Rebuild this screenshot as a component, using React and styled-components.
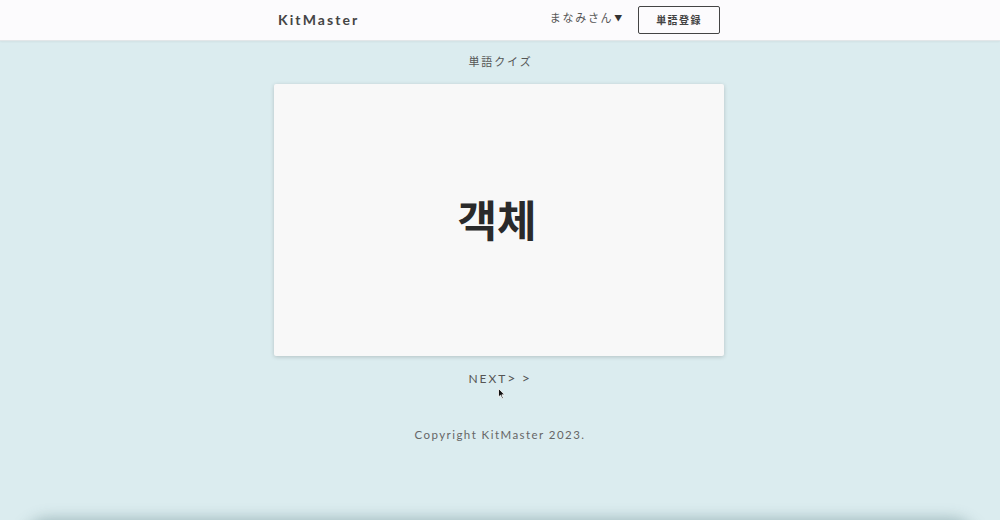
import React from "react";
import styled, { createGlobalStyle } from "styled-components";

const Global = createGlobalStyle`
  html, body { margin: 0; padding: 0; }
  body {
    background: #dbecef;
    font-family: Lato, "Noto Sans", "Noto Sans CJK JP", sans-serif;
    color: #444;
  }
`;

const Page = styled.div`
  position: relative;
  height: 520px;
  overflow: hidden;
`;

const Header = styled.header`
  background: #fcfbfd;
  height: 41px;
  border-bottom: 1px solid #e2e6e8;
  box-sizing: border-box;
  box-shadow: 0 1px 2px rgba(0,0,0,0.05);
`;

const HeaderInner = styled.div`
  width: 450px;
  margin: 0 auto;
  height: 100%;
  display: flex;
  align-items: center;
  padding: 0 5px 0 3px;
  box-sizing: border-box;
`;

const Logo = styled.div`
  font-size: 14px;
  font-weight: 700;
  letter-spacing: 2.1px;
  color: #454545;
  margin-top: -2px;
`;

const Spacer = styled.div`flex: 1;`;

const UserMenu = styled.div`
  font-family: "Noto Sans CJK JP", sans-serif;
  font-size: 11px;
  letter-spacing: 1.7px;
  color: #555;
  margin-right: 14px;
  margin-top: -6px;
  display: flex;
  align-items: center;
`;

const Caret = styled.span`
  font-size: 8px;
  margin-left: 1px;
  color: #333;
`;

const RegisterButton = styled.button`
  width: 82px;
  height: 28px;
  background: #fcfbfd;
  border: 1.5px solid #444;
  border-radius: 2px;
  font-family: "Noto Sans CJK JP", sans-serif;
  font-size: 10px;
  font-weight: 700;
  letter-spacing: 1.4px;
  color: #444;
  padding: 0;
  margin-top: -1px;
`;

const Main = styled.main`
  display: flex;
  flex-direction: column;
  align-items: center;
`;

const Title = styled.div`
  font-family: "Noto Sans CJK JP", sans-serif;
  font-size: 11px;
  letter-spacing: 1.9px;
  color: #555;
  margin-top: 12px;
  line-height: 16px;
  padding-left: 1px;
`;

const Card = styled.div`
  width: 450px;
  height: 272px;
  margin-top: 15px;
  margin-right: 2px;
  background: #f8f8f8;
  border-radius: 2px;
  box-shadow: 0 1px 4px rgba(0,0,0,0.18);
  display: flex;
  align-items: center;
  justify-content: center;
`;

const Word = styled.div`
  font-family: "Noto Sans CJK KR", sans-serif;
  font-size: 43px;
  font-weight: 700;
  color: #2a2a2a;
  margin-top: -5px;
  margin-left: -4px;
`;

const NextLink = styled.div`
  font-size: 12px;
  letter-spacing: 1.9px;
  color: #555;
  margin-top: 14px;
  line-height: 16px;
  padding-left: 0px;
  white-space: pre;
`;

const Arrow = styled.span`
  font-size: 14px;
  letter-spacing: 1.5px;
`;

const Copyright = styled.div`
  font-size: 11.5px;
  letter-spacing: 1.45px;
  color: #666;
  margin-top: 40px;
  line-height: 16px;
`;

const BottomPanel = styled.div`
  width: 960px;
  height: 60px;
  margin: 79px auto 0;
  border-radius: 30px;
  background: #dbecef;
  box-shadow: 0 -4px 14px rgba(70, 110, 115, 0.38);
`;

const Cursor = styled.svg`
  position: absolute;
  left: 498px;
  top: 388px;
`;

export default function App() {
  return (
    <Page>
      <Global />
      <Header>
        <HeaderInner>
          <Logo>KitMaster</Logo>
          <Spacer />
          <UserMenu>
            まなみさん<Caret>▼</Caret>
          </UserMenu>
          <RegisterButton>単語登録</RegisterButton>
        </HeaderInner>
      </Header>
      <Main>
        <Title>単語クイズ</Title>
        <Card>
          <Word>객체</Word>
        </Card>
        <NextLink>NEXT<Arrow>{"> >"}</Arrow></NextLink>
        <Copyright>Copyright KitMaster 2023.</Copyright>
      </Main>
      <BottomPanel />
      <Cursor width="8" height="12" viewBox="0 0 8 12">
        <path d="M0.5 0.5 L0.5 9 L2.6 7.2 L4 10.8 L5.3 10.3 L3.9 6.8 L6.6 6.8 Z" fill="#111" stroke="#fff" strokeWidth="0.8" />
      </Cursor>
    </Page>
  );
}
